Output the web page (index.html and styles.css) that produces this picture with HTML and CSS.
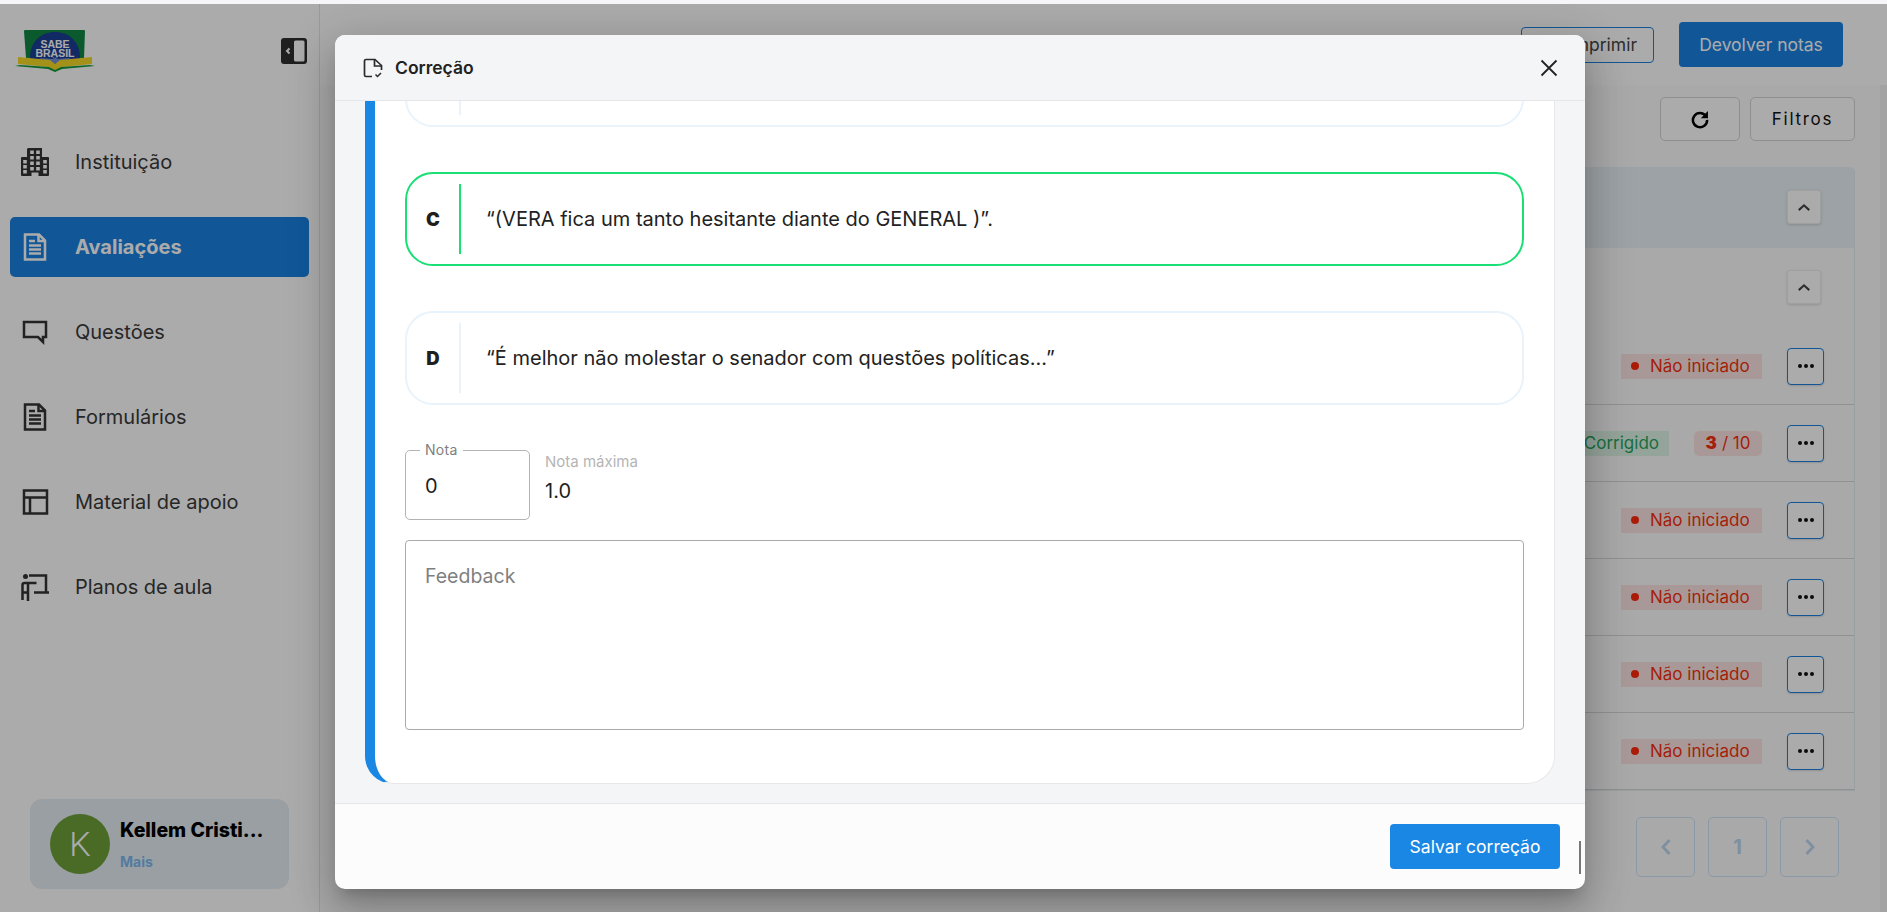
FILE: index.html
```html
<!DOCTYPE html>
<html lang="pt-BR">
<head>
<meta charset="utf-8">
<title>Correção</title>
<link rel="stylesheet" href="styles.css">
</head>
<body>
<div class="page">
  <aside class="sidebar">
    <div class="brand">
      <svg class="logo" viewBox="0 0 80 42">
        <path d="M10 0h59q1 0 1 1l-1 27H11L9 1q0-1 1-1z" fill="#0f8644"/>
        <path d="M15 30C14 12 26 2 40 2s26 10 25 28l-4 5H19z" fill="#1c3f94"/>
        <path d="M40 34L24 28l15 1-6-6 7 5 7-5-6 6 15-1z" fill="#6f8fd8"/>
        <text class="logo-text" x="40" y="18">SABE</text>
        <text class="logo-text" x="40" y="27">BRASIL</text>
        <path d="M3 27l32 3 5 4 5-4 32-3v7l-30 3-7 4-7-4-30-3z" fill="#f5d928"/>
        <path d="M0 36l5-1 29 2 6 3 6-3 29-2 5 1-33 3-7 3-7-3z" fill="#0f9a3c"/>
      </svg>
      <svg class="collapse" viewBox="0 0 26 26">
        <rect x="0" y="0" width="26" height="26" rx="3" fill="#2f2f2f"/>
        <rect x="13" y="2.500" width="10.500" height="21" rx="1.500" fill="#fff"/>
        <path d="M8.500 10.500L6 13l2.500 2.500" fill="none" stroke="#fff" stroke-width="2"/>
      </svg>
    </div>
    <nav class="menu">
      <a class="item">
        <svg class="ico" viewBox="0 0 28 28"><path class="fillb" d="M7 0h14v9h6q1 0 1 1v17q0 1-1 1H1q-1 0-1-1V10q0-1 1-1h5V1z"/><path class="win" d="M9.200 2.500h3.600v3.500H9.200zM15.200 2.500h3.600v3.500h-3.600zM9.200 8h3.600v3.500H9.200zM15.200 8h3.600v3.500h-3.600zM9.200 13.500h3.600v3.500H9.200zM15.200 13.500h3.600v3.500h-3.600zM9.200 19h3.600v3.500H9.200zM15.200 19h3.600v3.500h-3.600zM10.500 24.500h7V28h-7zM2.200 12h3.600v3.500H2.200zM2.200 17h3.600v3.500H2.200zM2.200 22h3.600v3.500H2.200zM22.200 12h3.600v3.500h-3.600zM22.200 17h3.600v3.500h-3.600zM22.200 22h3.600v3.500h-3.600z"/></svg>
        <span>Instituição</span>
      </a>
      <a class="item active">
        <svg class="ico" viewBox="0 0 28 28"><path class="ln" d="M4 1.500h14l6 6v19H4z"/><path class="ln" d="M17.500 1.500v6.500h6.500M8 8h6M8 12.500h12M8 16.500h12M8 20.500h12"/></svg>
        <span>Avaliações</span>
      </a>
      <a class="item">
        <svg class="ico" viewBox="0 0 28 28"><path class="ln" d="M3 4h22v15h-3v5l-5-5H3z"/></svg>
        <span>Questões</span>
      </a>
      <a class="item">
        <svg class="ico" viewBox="0 0 28 28"><path class="ln" d="M4 1.500h14l6 6v19H4z"/><path class="ln" d="M17.500 1.500v6.500h6.500M8 8h6M8 12.500h12M8 16.500h12M8 20.500h12"/></svg>
        <span>Formulários</span>
      </a>
      <a class="item">
        <svg class="ico" viewBox="0 0 28 28"><path class="ln" d="M3 2.500h23v23H3zM3 9.500h23M9 9.500v16"/></svg>
        <span>Material de apoio</span>
      </a>
      <a class="item">
        <svg class="ico" viewBox="0 0 28 28"><circle cx="4.500" cy="3.500" r="2.500" class="fillb"/><path class="ln" d="M8 2.500h17v17M28 19.500H13M1.500 27V12q0-2 2-2h12M7 10v18M7 19.500H1.500"/></svg>
        <span>Planos de aula</span>
      </a>
    </nav>
    <div class="user">
      <div class="avatar">K</div>
      <div class="user-info">
        <div class="user-name">Kellem Cristi...</div>
        <div class="user-more">Mais</div>
      </div>
    </div>
  </aside>
  <main class="main">
    <header class="topbar">
      <button class="btn-outline">Imprimir</button>
      <button class="btn-primary">Devolver notas</button>
    </header>
    <div class="content">
      <div class="scroll-area">
        <div class="tools">
          <button class="tool tool-icon">
            <svg class="refresh" viewBox="0 0 24 24"><path d="M19 8.500A8.500 8.500 0 1 0 20.500 13" fill="none" stroke="#000" stroke-width="3"/><path d="M21.500 2.500v8.500H13z" fill="#000"/></svg>
          </button>
          <button class="tool">Filtros</button>
        </div>
        <section class="panel">
          <div class="panel-head"><button class="up"><svg class="chev" viewBox="0 0 16 10"><path d="M2 8l6-5.500L14 8" /></svg></button></div>
          <div class="panel-sub"><button class="up"><svg class="chev" viewBox="0 0 16 10"><path d="M2 8l6-5.500L14 8" /></svg></button></div>
          <div class="row"><span class="badge-red"><i class="dot"></i>Não iniciado</span><button class="more"><b></b><b></b><b></b></button></div>
          <div class="row"><span class="badge-green">Corrigido</span><span class="score"><b>3</b> / 10</span><button class="more"><b></b><b></b><b></b></button></div>
          <div class="row"><span class="badge-red"><i class="dot"></i>Não iniciado</span><button class="more"><b></b><b></b><b></b></button></div>
          <div class="row"><span class="badge-red"><i class="dot"></i>Não iniciado</span><button class="more"><b></b><b></b><b></b></button></div>
          <div class="row"><span class="badge-red"><i class="dot"></i>Não iniciado</span><button class="more"><b></b><b></b><b></b></button></div>
          <div class="row"><span class="badge-red"><i class="dot"></i>Não iniciado</span><button class="more"><b></b><b></b><b></b></button></div>
        </section>
        <div class="pager">
          <span class="pg"><svg class="pg-ico" viewBox="0 0 12 18"><path d="M9.500 2L3 9l6.500 7"/></svg></span>
          <span class="pg">1</span>
          <span class="pg"><svg class="pg-ico" viewBox="0 0 12 18"><path d="M2.500 2L9 9l-6.500 7"/></svg></span>
        </div>
      </div>
      <div class="scrollbar"></div>
    </div>
  </main>

  <div class="overlay">
    <div class="modal">
      <div class="modal-head">
        <svg class="head-ico" viewBox="0 0 20 20"><path d="M9 18.500H3a1.500 1.500 0 0 1-1.500-1.500V3A1.500 1.500 0 0 1 3 1.500h9l6.500 6V12" fill="none" stroke="#2b2b2b" stroke-width="1.700"/><path d="M11.500 1.500V8H18.500" fill="none" stroke="#2b2b2b" stroke-width="1.700"/><path d="M12.500 16.500l2 2 3.500-3.500" fill="none" stroke="#2b2b2b" stroke-width="1.500"/></svg>
        <span class="modal-title">Correção</span>
        <svg class="close" viewBox="0 0 18 18"><path d="M1.500 1.500l15 15M16.500 1.500l-15 15" fill="none" stroke="#222" stroke-width="1.800"/></svg>
      </div>
      <div class="modal-body">
        <div class="card">
          <div class="option">
            <div class="opt-letter"></div>
            <div class="opt-text"></div>
          </div>
          <div class="option correct">
            <div class="opt-letter">C</div>
            <div class="opt-text">“(VERA fica um tanto hesitante diante do GENERAL )”.</div>
          </div>
          <div class="option">
            <div class="opt-letter">D</div>
            <div class="opt-text">“É melhor não molestar o senador com questões políticas...”</div>
          </div>
          <div class="grade">
            <fieldset class="grade-field">
              <legend>Nota</legend>
              <span class="grade-value">0</span>
            </fieldset>
            <div class="grade-max">
              <div class="max-label">Nota máxima</div>
              <div class="max-value">1.0</div>
            </div>
          </div>
          <div class="feedback">Feedback</div>
        </div>
      </div>
      <div class="modal-foot">
        <button class="save">Salvar correção</button>
        <div class="mark"></div>
      </div>
    </div>
  </div>
</div>
</body>
</html>
```
FILE: styles.css
```css
* { box-sizing: border-box; }
html, body { margin: 0; height: 100%; overflow: hidden; background: #f6f6f8; }
body { padding-top: 4px; font-family: "Inter", "Liberation Sans", sans-serif; color: #1f1f1f; }
button { font-family: inherit; cursor: pointer; }

.page { position: relative; display: flex; height: 908px; overflow: hidden; background: #fff; }

/* Sidebar */
.sidebar { width: 320px; flex: none; display: flex; flex-direction: column; background: #fff; border-right: 1px solid #e6e6e6; padding: 0 10px 23px; }
.brand { display: flex; justify-content: space-between; align-items: flex-start; height: 80px; padding: 26px 2px 0 5px; }
.logo { width: 80px; height: 42px; }
.logo-text { font-family: "Liberation Sans", sans-serif; font-weight: 700; font-size: 10.500px; fill: #fff; text-anchor: middle; }
.collapse { width: 26px; height: 26px; margin-top: 8px; }
.menu { display: flex; flex-direction: column; gap: 25px; margin-top: 48px; flex: 1; }
.item { display: flex; align-items: center; gap: 26px; height: 60px; padding-left: 11px; border-radius: 5px; font-size: 20px; color: #3a3a3a; }
.item.active { background: #1a82e2; color: #fff; font-weight: 700; }
.ico { width: 28px; height: 28px; flex: none; }
.ln { fill: none; stroke: #333; stroke-width: 2.500; }
.fillb { fill: #333; }
.win { fill: #fff; }
.active .ln { stroke: #fff; }

.user { display: flex; align-items: center; gap: 10px; height: 90px; margin: 0 20px; padding-left: 20px; border-radius: 12px; background: #e6eef3; }
.avatar { width: 60px; height: 60px; flex: none; border-radius: 50%; display: flex; align-items: center; justify-content: center; background: #6ea03a; color: #fff; font-size: 34px; font-weight: 300; font-family: "Roboto", sans-serif; }
.user-name { font-weight: 800; font-size: 19.500px; color: #000; }
.user-more { margin-top: 11px; font-weight: 700; font-size: 14px; color: #7db8ee; }

/* Main */
.main { flex: 1; min-width: 0; display: flex; flex-direction: column; background: #fff; }
.topbar { height: 81px; flex: none; display: flex; justify-content: flex-end; align-items: center; gap: 25px; padding: 0 44px 0 0; }
.btn-outline { width: 133px; height: 36px; border: 1px solid #1a82e2; border-radius: 4px; background: #fff; color: #444; font-size: 17.500px; text-align: right; padding: 0 16px 0 0; }
.btn-primary { width: 164px; height: 45px; border: 0; border-radius: 4px; background: #1a82e2; color: #fff; font-size: 17.500px; }
.content { flex: 1; min-height: 0; display: flex; background: #fdfdfd; }
.scroll-area { flex: 1; min-width: 0; padding: 12px 25px 0 40px; }
.scrollbar { width: 7px; background: #f3f3f3; }
.tools { display: flex; justify-content: flex-end; gap: 10px; height: 44px; margin-bottom: 26px; }
.tool { width: 105px; border: 1px solid #d4d4d8; border-radius: 5px; background: #fff; color: #111; font-size: 17px; letter-spacing: 1.700px; }
.tool-icon { width: 80px; display: flex; align-items: center; justify-content: center; }
.refresh { width: 20px; height: 20px; }
.panel { border: 1px solid #e4ecef; border-top: 0; border-radius: 5px 5px 0 0; }
.panel-head, .panel-sub { display: flex; justify-content: flex-end; padding-right: 33px; }
.panel-head { height: 81px; padding-top: 23px; background: #e9f2f6; border-radius: 5px 5px 0 0; }
.panel-sub { height: 80px; padding-top: 22px; border-bottom: 1px solid transparent; }
.up { width: 34px; height: 34px; display: flex; align-items: center; justify-content: center; border: 1px solid #eee; border-radius: 3px; background: #fff; box-shadow: 0 1px 3px rgba(0,0,0,.15); padding: 0; }
.chev { width: 14px; height: 9px; fill: none; stroke: #444; stroke-width: 2.400; }
.row { height: 77px; display: flex; justify-content: flex-end; align-items: center; padding-right: 30px; border-bottom: 1px solid #d8d8d8; }
.badge-red { display: flex; align-items: center; width: 141px; height: 25px; padding-left: 10px; margin-right: 25px; background: #fbe5e3; color: #f5300f; font-size: 17px; }
.dot { width: 8px; height: 8px; border-radius: 50%; background: #ff2a0c; margin-right: 11px; }
.badge-green { display: flex; align-items: center; justify-content: flex-end; width: 130px; height: 25px; padding-right: 10px; margin-right: 25px; background: #dff5e8; color: #27a55d; font-size: 17px; }
.score { display: flex; align-items: center; justify-content: center; gap: 5px; width: 68px; height: 25px; margin-right: 25px; border-radius: 5px; background: #fbe5e3; color: #f5300f; font-size: 17px; }
.score b { font-weight: 900; }
.more { width: 37px; height: 37px; display: flex; align-items: center; justify-content: center; gap: 2px; border: 1px solid #1a82e2; border-radius: 4px; background: #fff; padding: 0; box-shadow: 0 1px 2px rgba(0,0,0,.15); }
.more b { width: 4px; height: 4px; border-radius: 50%; background: #111; }
.pager { display: flex; justify-content: flex-end; gap: 13px; margin-top: 26px; padding-right: 16px; }
.pg { width: 59px; height: 60px; display: flex; align-items: center; justify-content: center; border: 1px solid #cfe4f8; border-radius: 5px; font-size: 20px; font-weight: 700; color: #bcd5ee; }
.pg-ico { width: 12px; height: 18px; fill: none; stroke: #bcd5ee; stroke-width: 2.800; }

/* Modal */
.overlay { position: absolute; inset: 0; padding: 31px 0 19px 335px; background: rgba(0,0,0,.33); }
.modal { width: 1250px; height: 854px; display: flex; flex-direction: column; border-radius: 10px; overflow: hidden; background: #fcfcfd; box-shadow: 0 11px 15px -7px rgba(0,0,0,.2), 0 24px 38px 3px rgba(0,0,0,.14), 0 9px 46px 8px rgba(0,0,0,.12); }
.modal-head { height: 66px; flex: none; display: flex; align-items: center; padding: 0 27px 0 28px; background: #f4f5f7; border-bottom: 1px solid #e5e7eb; }
.head-ico { width: 20px; height: 20px; flex: none; margin-right: 12px; }
.modal-title { flex: 1; font-size: 17.500px; font-weight: 600; color: #222; }
.close { width: 18px; height: 18px; }
.modal-body { height: 702px; flex: none; padding: 0 30px; background: #f4f5f7; overflow: hidden; }
.card { margin-top: -68px; padding: 0 30px 53px; background: #fff; border: 1px solid #e8e8ea; border-left: 10px solid #1a87e5; border-top: 0; border-radius: 28px; }
.option { display: flex; align-items: center; height: 94px; margin-bottom: 45px; padding: 10px 0; border: 2px solid #e8f3fc; border-radius: 28px; }
.opt-letter { width: 54px; height: 100%; flex: none; display: flex; align-items: center; justify-content: center; border-right: 2px solid #e8f3fc; font-weight: 900; font-size: 18.500px; color: #1f1f1f; }
.opt-text { padding-left: 25px; font-size: 20px; color: #222; }
.correct { border-color: #19df75; }
.correct .opt-letter { border-right-color: #19df75; }
.grade { display: flex; gap: 15px; height: 70px; margin-bottom: 20px; }
.grade-field { width: 125px; height: 76px; margin: -6px 0 0; padding: 0 19px; border: 1px solid #b3b3b3; border-radius: 5px; }
.grade-field legend { padding: 0 5px; margin-left: -5px; font-size: 14px; letter-spacing: .3px; color: #808080; line-height: 12px; }
.grade-value { display: block; margin-top: 18px; font-size: 20px; color: #1f1f1f; }
.max-label { font-size: 15px; color: #b5b5b5; margin-top: 2px; }
.max-value { margin-top: 8px; font-size: 20px; color: #1f1f1f; }
.feedback { height: 190px; padding: 23px 19px; border: 1px solid #aaa; border-radius: 4px; font-size: 19.500px; color: #7f7f7f; }
.modal-foot { flex: 1; display: flex; justify-content: flex-end; align-items: flex-start; gap: 19px; padding: 20px 4px 0 0; border-top: 1px solid #e5e7eb; }
.save { width: 170px; height: 45px; border: 0; border-radius: 4px; background: #1a87e5; color: #fff; font-size: 17.500px; }
.mark { width: 2px; height: 33px; margin-top: 17px; background: #777; }
```
